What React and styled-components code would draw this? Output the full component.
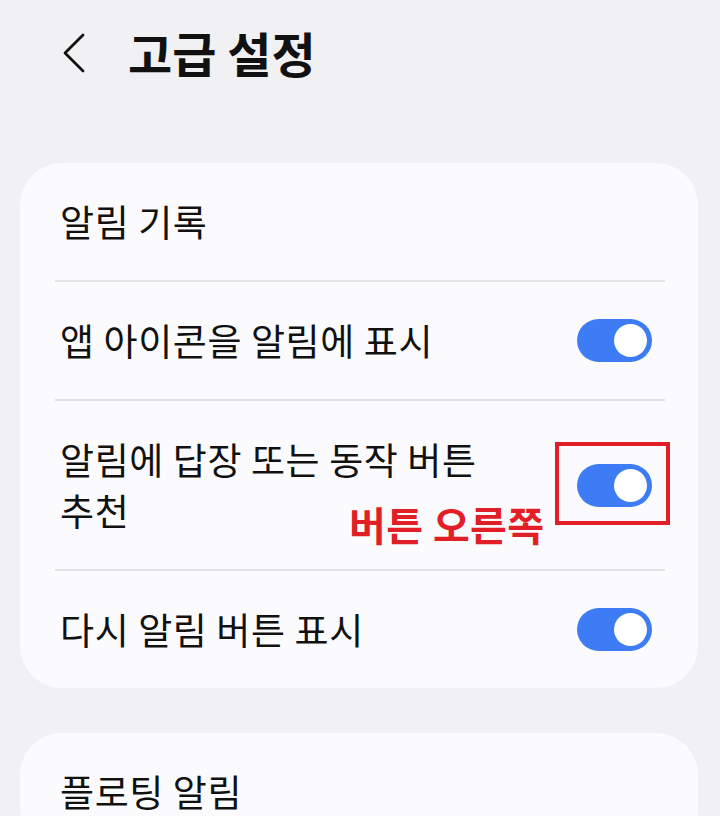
import React from "react";
import styled, { createGlobalStyle } from "styled-components";

const GlobalStyle = createGlobalStyle`
  html, body {
    margin: 0;
    padding: 0;
    background: #f1f1f3;
    overflow: hidden;
  }
  body {
    font-family: "Noto Sans CJK KR", "Noto Sans", sans-serif;
    color: #111;
  }
`;

const Page = styled.div`
  width: 720px;
  height: 816px;
  display: flex;
  flex-direction: column;
  background: #f1f1f3;
  overflow: hidden;
`;

const Header = styled.header`
  height: 106px;
  flex-shrink: 0;
  display: flex;
  align-items: center;
  padding-left: 62px;
  gap: 42px;
`;

const BackButton = styled.button`
  border: none;
  background: none;
  padding: 0;
  width: 24px;
  height: 42px;
  display: flex;
  align-items: center;
  justify-content: center;
`;

const Title = styled.h1`
  margin: 0;
  font-size: 48px;
  font-weight: 700;
  line-height: 1.2;
  letter-spacing: 0;
`;

const Card = styled.section`
  margin: ${(p) => p.$top}px 22px 0 20px;
  background: #fbfbfd;
  border-radius: 42px;
  flex-shrink: 0;
`;

const Row = styled.div`
  position: relative;
  display: flex;
  align-items: center;
  justify-content: space-between;
  padding: 33px 46px 33px 40px;
  gap: 24px;
`;

const Label = styled.span`
  font-size: 37px;
  line-height: 51px;
  font-weight: 400;
  letter-spacing: 0.6px;
  word-break: keep-all;
  max-width: ${(p) => (p.$narrow ? "450px" : "none")};
`;

const Divider = styled.hr`
  margin: 0 33px 0 35px;
  border: none;
  height: 2px;
  background: #e4e4e7;
`;

const Track = styled.div`
  width: 75px;
  height: 43px;
  border-radius: 22px;
  background: #3e7cf6;
  display: flex;
  align-items: center;
  justify-content: flex-end;
  padding: 0 5px;
  box-sizing: border-box;
  flex-shrink: 0;
`;

const Thumb = styled.div`
  width: 33px;
  height: 33px;
  border-radius: 50%;
  background: #ffffff;
`;

const Highlight = styled.div`
  position: absolute;
  left: 535px;
  top: 41px;
  width: 115px;
  height: 83px;
  border: 4px solid #e21f26;
  box-sizing: border-box;
  pointer-events: none;
`;

const Note = styled.span`
  position: absolute;
  left: 329px;
  top: 100px;
  font-size: 40px;
  line-height: 46px;
  font-weight: 700;
  letter-spacing: 0.4px;
  color: #e21f26;
  white-space: nowrap;
`;

function Toggle() {
  return (
    <Track>
      <Thumb />
    </Track>
  );
}

export default function App() {
  return (
    <Page>
      <GlobalStyle />
      <Header>
        <BackButton aria-label="뒤로">
          <svg width="24" height="42" viewBox="0 0 24 42" fill="none">
            <path
              d="M21 3 L3 21 L21 39"
              stroke="#111"
              strokeWidth="2.8"
              strokeLinecap="round"
              strokeLinejoin="round"
            />
          </svg>
        </BackButton>
        <Title>고급 설정</Title>
      </Header>

      <Card $top={57}>
        <Row>
          <Label>알림 기록</Label>
        </Row>
        <Divider />
        <Row>
          <Label>앱 아이콘을 알림에 표시</Label>
          <Toggle />
        </Row>
        <Divider />
        <Row>
          <Label $narrow>알림에 답장 또는 동작 버튼 추천</Label>
          <Toggle />
          <Highlight />
          <Note>버튼 오른쪽</Note>
        </Row>
        <Divider />
        <Row>
          <Label>다시 알림 버튼 표시</Label>
          <Toggle />
        </Row>
      </Card>

      <Card $top={45}>
        <Row>
          <Label>플로팅 알림</Label>
        </Row>
      </Card>
    </Page>
  );
}
